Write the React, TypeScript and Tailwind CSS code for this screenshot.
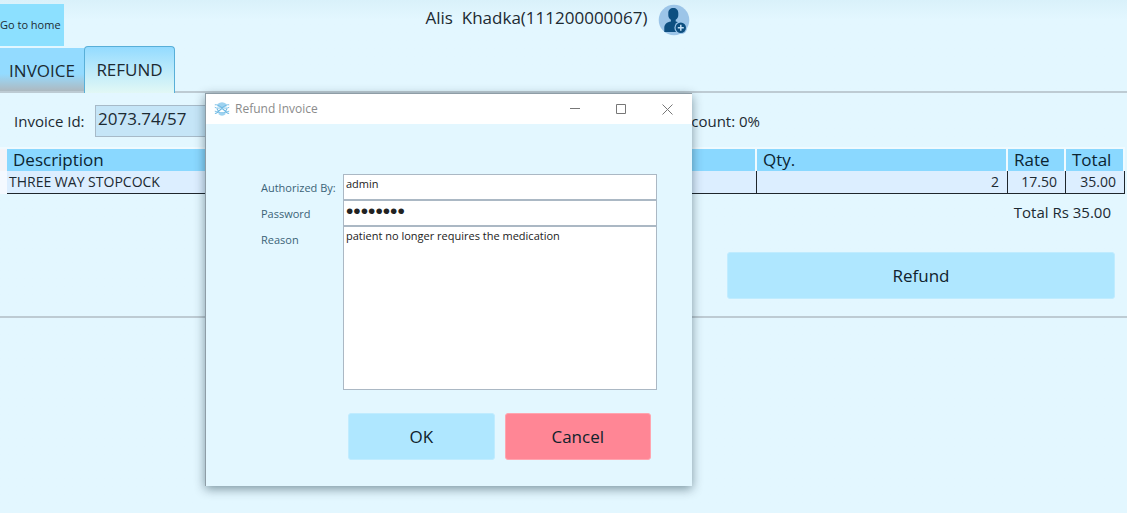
import { useState } from "react";

type Line = { description: string; qty: number; rate: string; total: string };

const lines: Line[] = [
  { description: "THREE WAY STOPCOCK", qty: 2, rate: "17.50", total: "35.00" },
];

function UserAddIcon() {
  return (
    <svg viewBox="0 0 32 32" className="size-8 shrink-0" aria-hidden="true">
      <circle cx="16" cy="16" r="15.3" fill="#9cc5e8" />
      <path
        d="M15.300 4c3 0 5 2 5 5v2.200c0 2-1.200 3.800-2.600 4.600v1.600c3.500.8 6.300 1.600 6.800 5v5.600H6.300v-4c0-4.200 2.600-5.800 6.600-6.600v-1.600c-1.400-.8-2.600-2.600-2.600-4.600V9c0-3 2-5 5-5Z"
        fill="#0d4f80"
      />
      <circle cx="22.800" cy="23.700" r="6.400" fill="#9cc5e8" />
      <circle cx="22.800" cy="23.700" r="5.200" fill="#0d4f80" />
      <path d="M22.800 20.700v6M19.800 23.700h6" stroke="#c4e0f5" strokeWidth="1.500" />
    </svg>
  );
}

function AppLogo() {
  return (
    <svg viewBox="0 0 16 14" className="h-3.5 w-4 shrink-0" fill="none" stroke="#6bb8e3" aria-hidden="true">
      <path d="M3.500 2Q8-1.500 12.500 2v2.500L8 6 3.500 4.500Z" fill="#9dd2f0" stroke="none" />
      <path d="M.8 2.800C3 2.300 5 3.800 8 5.600c3-1.800 5-3.300 7.200-2.800M.8 5.300c2 1.400 5 .8 7.200.2 2.200.6 5.200 1.200 7.200-.2" strokeWidth="0.900" />
      <path d="M.9 11.500C3.500 11.500 5 8.200 8 6.500c3 1.700 4.500 5 7.100 5M3 6.800l1.500 2.400M13 6.800l-1.500 2.400" strokeWidth="1.100" />
      <path d="M.8 9.200c2.200 0 4.500 2.300 7.200 1.300 2.700 1 5-1.300 7.200-1.300" strokeWidth="0.900" />
      <path d="M4 11.800Q8 15.500 12 11.800L8 10Z" fill="#9dd2f0" stroke="none" />
    </svg>
  );
}

const captionButton = "flex h-full w-[46px] items-center justify-center text-[#777]";
const field =
  "block w-full resize-none rounded-none border border-[#abb8c4] bg-white px-0.5 text-[#222] outline-none";
const label = "text-[11px] leading-4 text-[#3b6377]";
const action = "h-[47px] rounded-[3px] border text-[17px] text-[#10222c]";

function RefundDialog() {
  const [by, setBy] = useState("admin");
  const [password, setPassword] = useState("password");
  const [reason, setReason] = useState("patient no longer requires the medication");

  return (
    <div
      role="dialog"
      aria-labelledby="dialog-title"
      className="absolute left-[205px] top-[93px] w-[487px] border-l border-t border-[#8e9da6] bg-[#e3f7ff] shadow-[0_3px_10px_rgba(0,30,45,0.450)]"
    >
      <div className="flex h-[30px] items-center bg-white pl-2 pr-0.5">
        <AppLogo />
        <h2 id="dialog-title" className="flex-1 pl-[5px] text-[12px] text-[#8b8b8b]">
          Refund Invoice
        </h2>
        <button type="button" aria-label="Minimize" className={captionButton}>
          <svg viewBox="0 0 10 10" className="size-2.5" stroke="currentColor" fill="none">
            <path d="M0 4.500h10" />
          </svg>
        </button>
        <button type="button" aria-label="Maximize" className={captionButton}>
          <svg viewBox="0 0 10 10" className="size-2.5" stroke="currentColor" fill="none">
            <path d="M.5.5h9v9h-9z" />
          </svg>
        </button>
        <button type="button" aria-label="Close" className={captionButton}>
          <svg viewBox="0 0 11 11" className="size-[11px]" stroke="currentColor" fill="none">
            <path d="m.5.5 10 10M10.500.5l-10 10" />
          </svg>
        </button>
      </div>
      <form className="pb-[26px] pt-[50px]" onSubmit={(e) => e.preventDefault()}>
        <div className="grid grid-cols-[82px_1fr] pl-[55px] pr-[35px]">
          <label htmlFor="by" className={`${label} whitespace-nowrap pt-[6px]`}>
            Authorized By:
          </label>
          <input
            id="by"
            value={by}
            onChange={(e) => setBy(e.target.value)}
            className={`${field} h-[26px] pb-2 text-[11px]`}
          />
          <label htmlFor="pw" className={`${label} pt-[6px]`}>
            Password
          </label>
          <input
            id="pw"
            type="password"
            value={password}
            onChange={(e) => setPassword(e.target.value)}
            className={`${field} h-[26px] pb-1 font-['Liberation_Sans',sans-serif] text-[21px]`}
          />
          <label htmlFor="reason" className={`${label} pt-[6px]`}>
            Reason
          </label>
          <textarea
            id="reason"
            value={reason}
            onChange={(e) => setReason(e.target.value)}
            className={`${field} h-[164px] pt-px text-[11px] leading-4`}
          />
        </div>
        <div className="mt-[23px] grid grid-cols-2 gap-2.5 pl-[142px] pr-[41px]">
          <button type="submit" className={`${action} border-[#c0ecff] bg-[#afe7ff]`}>
            OK
          </button>
          <button type="button" className={`${action} border-[#ffa5b0] bg-[#ff8695]`}>
            Cancel
          </button>
        </div>
      </form>
    </div>
  );
}

export default function App() {
  const [invoiceId, setInvoiceId] = useState("2073.74/57");
  const th = "border-r-2 border-[#effaff] pl-1.5 text-left text-[17px] font-normal text-[#0b2431]";
  const td = "border-b border-r border-[#1e262c] px-2 text-right";

  return (
    <div className="relative min-h-screen overflow-hidden bg-[#e3f7ff] bg-linear-to-b from-[#d9f1fa] to-[#e3f7ff] to-[20px] font-['Open_Sans','Noto_Sans',sans-serif] text-[#1c2a32]">
      <header className="grid h-[46px] grid-cols-[64px_1fr_76px] items-start">
        <button
          type="button"
          className="mt-1 flex h-[42px] items-center whitespace-nowrap bg-[#8ce0ff] text-[11px]"
        >
          Go to home
        </button>
        <div className="flex items-center justify-center gap-2.5 pt-1">
          <span className="whitespace-pre pb-1 text-[17px] leading-7">Alis  Khadka(111200000067)</span>
          <UserAddIcon />
        </div>
      </header>

      <nav role="tablist" className="flex h-[47px] items-end border-b-2 border-[#bdcbd3] text-[17px]">
        <button
          type="button"
          role="tab"
          aria-selected="false"
          className="h-[43px] w-[84px] bg-linear-to-b from-[#93dbff] from-60% to-[#adb9c0] pt-0.5 text-center"
        >
          INVOICE
        </button>
        <button
          type="button"
          role="tab"
          aria-selected="true"
          className="-mb-0.5 h-[47px] w-[91px] rounded-t border border-b-0 border-[#58afd8] bg-linear-to-b from-[#93dbff] to-[#e2f8f5]"
        >
          REFUND
        </button>
      </nav>

      <main className="border-b-2 border-[#bdcbd3] pb-[17px]">
        <div className="flex items-center pl-3.5 pt-3">
          <label htmlFor="invoice" className="w-[81px] text-[15px]">
            Invoice Id:
          </label>
          <input
            id="invoice"
            value={invoiceId}
            onChange={(e) => setInvoiceId(e.target.value)}
            className="h-8 w-[180px] rounded-none border border-[#a7bac8] bg-[#c5e5f7] px-0.5 pb-1.5 text-[17px] outline-none"
          />
          <span className="w-[485px] text-right text-[15px]">Discount: 0%</span>
        </div>

        <table className="mt-2.5 w-full table-fixed border-separate border-spacing-0 pr-0.5">
          <colgroup>
            <col className="w-[7px]" />
            <col />
            <col className="w-[251px]" />
            <col className="w-[58px]" />
            <col className="w-[59px]" />
          </colgroup>
          <thead>
            <tr className="h-6 leading-[22px]">
              <th className="border-t-2 border-[#effaff] bg-[#f4f4f8]" />
              {["Description", "Qty.", "Rate", "Total"].map((h) => (
                <th key={h} scope="col" className={`${th} border-t-2 bg-[#8ad8ff]`}>
                  {h}
                </th>
              ))}
            </tr>
          </thead>
          <tbody>
            {lines.map((l) => (
              <tr key={l.description} className="h-[23px] bg-[#dceeff] text-[14px] leading-5">
                <td className="bg-[#f4f9ff]" />
                <td className={`${td} !px-0.5 !text-left`}>{l.description}</td>
                <td className={td}>{l.qty}</td>
                <td className={td}>{l.rate}</td>
                <td className={td}>{l.total}</td>
              </tr>
            ))}
          </tbody>
        </table>

        <p className="pr-4 pt-1.5 text-right text-[15px] leading-6">Total Rs 35.00</p>
        <div className="mt-7 flex justify-end pr-3">
          <button type="button" className={`${action} w-[388px] border-[#c0ecff] bg-[#afe7ff]`}>
            Refund
          </button>
        </div>
      </main>

      <RefundDialog />
    </div>
  );
}
